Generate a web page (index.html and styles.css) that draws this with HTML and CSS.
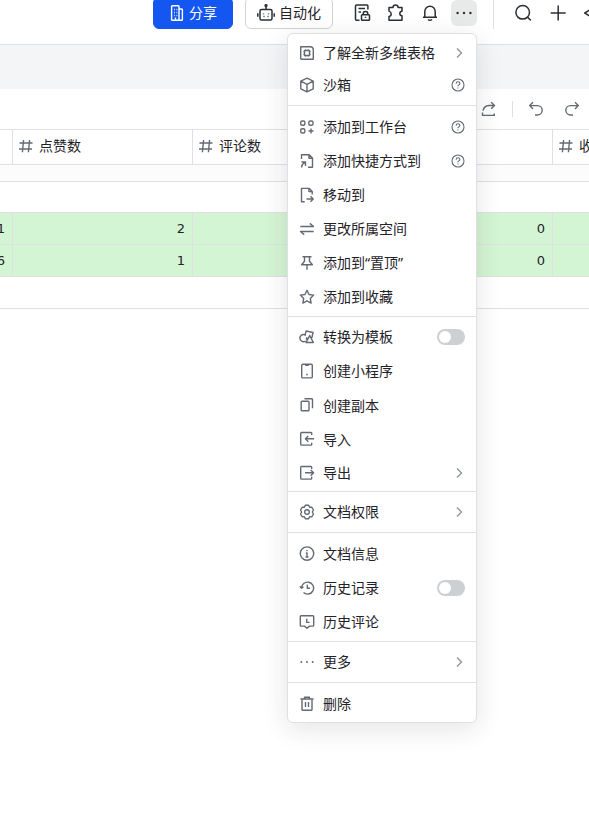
FILE: index.html
```html
<!DOCTYPE html>
<html lang="zh-CN">
	<head>
		<meta charset="utf-8">
		<title>多维表格</title>
		<meta name="viewport" content="width=device-width, initial-scale=1.0">
		<link rel="stylesheet" href="styles.css">
	</head>
	<body>
	<header class="topbar">
		<button class="btn btn-share">
			<svg class="icon" viewBox="0 0 16 16"><path d="M2.6 14.2V1.6q0-.8.8-.8h5.800q.8 0 .8.8v13.600H3.400q-.8 0-.8-.8zM10 4h2.600q.8 0 .8.8v9.600q0 .8-.8.8H10M5 4.500h.8M7.500 4.500h.8M5 7.500h.8M7.500 7.500h.8M5 10.500h.8M7.500 10.500h.8M6.500 12.500v2.500"/></svg>
			<span>分享</span>
		</button>
		<button class="btn btn-auto">
			<svg class="icon" viewBox="0 0 18 18"><rect x="3" y="5.500" width="12" height="10.500" rx="1.500"/><path d="M9 2v3.500M.8 9.300v3.400M17.200 9.300v3.400M6.500 12.500h1M10.500 12.500h1M6.500 9.500v.8M11.500 9.500v.8"/><circle cx="9" cy="1.600" r=".9"/></svg>
			<span>自动化</span>
		</button>
		<nav class="tools">
			<a><svg class="icon" viewBox="0 0 18 18"><path d="M6.500 16.300H3.500q-1 0-1-1V2q0-1 1-1h10.400q1 0 1 1v3.500M5.500 4.600h6.500M5.500 8h2.500"/><rect x="8.500" y="10.700" width="8" height="5.600" rx=".8"/><path d="M10.300 10.500V9q0-1.600 2.200-1.600T14.700 9v1.500M12.500 12.700v1.400"/></svg></a>
			<a><svg class="icon" viewBox="0 0 18 18"><path d="M2 3.500h4q0-2.400 2.500-2.400T11 3.500h4v3.700q-2.200.2-2.200 2.300t2.200 2.300v4.400H2v-3.700q2.200-.4 2.200-2.500T2 7.100z"/></svg></a>
			<a><svg class="icon" viewBox="0 0 18 18"><path d="M2 13.200h14M3.800 13V7.500a5.200 5.200 0 0 1 10.400 0V13M7 15.500q2 1.600 4 0"/></svg></a>
			<a class="more"><svg class="icon dots" viewBox="0 0 18 18"><circle cx="2.600" cy="9" r="1.200"/><circle cx="9" cy="9" r="1.200"/><circle cx="15.400" cy="9" r="1.200"/></svg></a>
		</nav>
		<i class="bar"></i>
		<nav class="tools tools-right">
			<a><svg class="icon" viewBox="0 0 18 18"><circle cx="8.700" cy="8.300" r="6.800"/><path d="M13.600 13.200l3.200 3.200"/></svg></a>
			<a><svg class="icon" viewBox="0 0 18 18"><path d="M1.700 9h15M9.200 1.500v15"/></svg></a>
			<a><svg class="icon" viewBox="0 0 18 18"><path d="M6.500 5.500L.8 9l5.700 3.500L9 17l2.500-4.500L17.200 9l-5.700-3.500L9 1z"/></svg></a>
		</nav>
	</header>
	<div class="band"></div>
	<div class="toolbar">
		<svg class="icon" viewBox="0 0 16 16"><path d="M1.500 11.500v2.900h11.800v-1.800M2 9.700Q3 4.700 8 4.500h5.200M10.200 1.200l3.300 3.300-3.300 3.300"/></svg>
		<i class="bar"></i>
		<svg class="icon" viewBox="0 0 16 16"><path d="M5 1.300L1.700 4.600 5 7.900M2 4.600h7.500a4.700 4.700 0 0 1 0 9.400H7"/></svg>
		<svg class="icon" viewBox="0 0 16 16"><path d="M11 1.300l3.300 3.300L11 7.900M14 4.600H6.500a4.700 4.700 0 0 0 0 9.400H9"/></svg>
	</div>
	<main class="table">
		<div class="row head">
			<div></div>
			<div><svg class="icon" viewBox="0 0 16 16"><path d="M5.600 2L4.400 14.200M11.600 2l-1.200 12.200M1.500 5h13M1 11h13"/></svg>点赞数</div>
			<div><svg class="icon" viewBox="0 0 16 16"><path d="M5.600 2L4.400 14.200M11.600 2l-1.200 12.200M1.500 5h13M1 11h13"/></svg>评论数</div>
			<div></div>
			<div><svg class="icon" viewBox="0 0 16 16"><path d="M5.600 2L4.400 14.200M11.600 2l-1.200 12.200M1.500 5h13M1 11h13"/></svg>收</div>
		</div>
		<div class="spacer"></div>
		<div class="blank first"></div>
		<div class="row green"><div>1</div><div>2</div><div></div><div>0</div><div></div></div>
		<div class="row green"><div>6</div><div>1</div><div></div><div>0</div><div></div></div>
		<div class="blank"></div>
	</main>

	<div class="menu">
		<ul class="g1">
			<li><svg class="icon" viewBox="0 0 16 16"><path d="M1.700 1.700h9.500q3.100 0 3.100 3.100v9.500H2.700q-1 0-1-1z"/><path d="M6.500 4.500v1M9.500 4.500v1M6.500 10.500v1M9.500 10.500v1M4.500 6.500h1M4.500 9.500h1M10.500 6.500h1M10.500 9.500h1"/><rect x="5.500" y="5.500" width="5" height="5" rx=".5"/></svg><span>了解全新多维表格</span><svg class="arrow" viewBox="0 0 12 12"><path d="M4 1.500L8.500 6 4 10.500"/></svg></li>
			<li><svg class="icon" viewBox="0 0 16 16"><path d="M8 1.200l6.200 3v7.600L8 14.900l-6.200-3.100V4.200zM1.800 4.200L8 7.300l6.200-3.100M8 7.300v7.600"/></svg><span>沙箱</span><svg class="help" viewBox="0 0 14 14"><circle cx="7" cy="7" r="6"/><path d="M5.100 5.700q0-1.900 1.900-1.900t1.900 1.700Q8.900 6.500 7 7.400v.8M7 9.500v1"/></svg></li>
		</ul>
		<ul class="g2">
			<li><svg class="icon" viewBox="0 0 16 16"><rect x="1.700" y="2" width="4.200" height="4.200" rx="1.500"/><rect x="9.800" y="2" width="4.200" height="4.200" rx="1.500"/><rect x="1.700" y="9.800" width="4.200" height="4.200" rx="1.500"/><path d="M12 9.500v5M9.500 12h5"/></svg><span>添加到工作台</span><svg class="help" viewBox="0 0 14 14"><circle cx="7" cy="7" r="6"/><path d="M5.100 5.700q0-1.900 1.900-1.900t1.900 1.700Q8.900 6.500 7 7.400v.8M7 9.500v1"/></svg></li>
			<li><svg class="icon" viewBox="0 0 16 16"><path d="M2.500 6V1.700h7.700L13.500 5v9.300H9M10 1.800v3.400h3.300M2.500 9h4v4M6.300 9.200Q3 10.500 2.500 14.500"/></svg><span>添加快捷方式到</span><svg class="help" viewBox="0 0 14 14"><circle cx="7" cy="7" r="6"/><path d="M5.100 5.700q0-1.900 1.900-1.900t1.900 1.700Q8.900 6.500 7 7.400v.8M7 9.500v1"/></svg></li>
			<li><svg class="icon" viewBox="0 0 16 16"><path d="M5.700 14.700H2.500V1.400h7.700l3 3V7.500M9.900 1.500v3.100H13M7.500 12h6.200M11.500 9.300l2.700 2.700-2.700 2.700"/></svg><span>移动到</span></li>
			<li><svg class="icon" viewBox="0 0 16 16"><path d="M1.300 5.500h13.200L10.800 2.400M14.700 10.500H1.500l3.700 3.100"/></svg><span>更改所属空间</span></li>
			<li><svg class="icon" viewBox="0 0 16 16"><path d="M3.500 1.700h9M5.500 1.900v4.300L2.600 9.700h10.800l-2.900-3.500V1.900M8 9.700v5"/></svg><span>添加到“置顶”</span></li>
			<li><svg class="icon" viewBox="0 0 16 16"><path d="M8 1.300l2 4.200 4.700.6-3.400 3.300.8 4.700L8 11.900l-4.100 2.200.8-4.700L1.300 6.100 6 5.500z"/></svg><span>添加到收藏</span></li>
		</ul>
		<ul class="g3">
			<li><svg class="icon" viewBox="0 0 16 16"><path d="M6.500 12a3.500 3.500 0 1 1 .3-5.500M6 6l1.200-4 6.800 1.500-1.200 5.500M10.700 6.600l3.700 6.900H7zM7.500 8.200q.5 1-.2 2.500"/></svg><span>转换为模板</span><i class="switch"></i></li>
			<li><svg class="icon" viewBox="0 0 16 16"><rect x="2.700" y="1.200" width="10.600" height="13.700" rx="1.200"/><path d="M6.200 2.300h3.600M7.200 11.500h1.600"/></svg><span>创建小程序</span></li>
			<li class="nudge"><svg class="icon" viewBox="0 0 16 16"><rect x="2.200" y="4.300" width="7.800" height="9.500" rx=".8"/><path d="M5.500 1.800h7.200q.8 0 .8.8v8.700"/></svg><span>创建副本</span></li>
			<li class="nudge"><svg class="icon" viewBox="0 0 16 16"><path d="M12.700 4V2.300q0-.8-.8-.8H2.500q-.8 0-.8.8v11q0 .8.8.8h9.400q.8 0 .8-.8V11.700M15 7.800H6.700M9.300 4.900L6.400 7.800l2.900 2.900"/></svg><span>导入</span></li>
			<li><svg class="icon" viewBox="0 0 16 16"><path d="M12.700 4V2.300q0-.8-.8-.8H2.500q-.8 0-.8.8v11q0 .8.8.8h9.400q.8 0 .8-.8V11.700M6 7.800h8.500M11.700 4.900l2.900 2.900-2.900 2.900"/></svg><span>导出</span><svg class="arrow" viewBox="0 0 12 12"><path d="M4 1.500L8.500 6 4 10.500"/></svg></li>
		</ul>
		<ul class="g4">
			<li><svg class="icon" viewBox="0 0 16 16"><path d="M6.300 1.300h3.400l.9 1.900 2.100-.1 1.800 2.900L13.300 8l1.200 2-1.800 2.900-2.100-.1-.9 1.900H6.300l-.9-1.900-2.100.1L1.500 10l1.200-2-1.200-2 1.800-2.900 2.100.1z"/><circle cx="8" cy="8" r="2.300"/></svg><span>文档权限</span><svg class="arrow" viewBox="0 0 12 12"><path d="M4 1.500L8.500 6 4 10.500"/></svg></li>
		</ul>
		<ul class="g5">
			<li><svg class="icon" viewBox="0 0 16 16"><circle cx="8" cy="7.600" r="6.700"/><path d="M8 3.900v1.300M6.800 7H8v4M6.500 11h3"/></svg><span>文档信息</span></li>
			<li><svg class="icon" viewBox="0 0 16 16"><path d="M2.600 8.500a6 6 0 1 1 1.900 4M.9 6.300l1.700 2 1.900-1.500M8.300 4.700v3.600H11"/></svg><span>历史记录</span><i class="switch"></i></li>
			<li><svg class="icon" viewBox="0 0 16 16"><path d="M2.100 1.700h11.800q.8 0 .8.8v8.800q0 .8-.8.8h-3.400L8 14.300l-2.500-2.200H2.100q-.8 0-.8-.8V2.500q0-.8.8-.8zM7.700 4.700v3.700h2.800"/></svg><span>历史评论</span></li>
		</ul>
		<ul class="g6">
			<li><svg class="icon dots" viewBox="0 0 16 16"><circle cx="2.300" cy="8" r="1"/><circle cx="8" cy="8" r="1"/><circle cx="13.700" cy="8" r="1"/></svg><span>更多</span><svg class="arrow" viewBox="0 0 12 12"><path d="M4 1.500L8.500 6 4 10.500"/></svg></li>
		</ul>
		<ul class="g7">
			<li><svg class="icon" viewBox="0 0 16 16"><path d="M1.500 3h13M5.500 2.800V1.300h5v1.500M3 3v10.400q0 .9.900.9h8.200q.9 0 .9-.9V3M6.500 6v5M9.500 6v5"/></svg><span>删除</span></li>
		</ul>
	</div>
	</body>
</html>
```
FILE: styles.css
```css
*{
	box-sizing: border-box;
}

body{
	margin: 0;
	position: relative;
	height: 837px;
	overflow: hidden;
	background: #fff;
	color: #1f2329;
	font: 14px/20px "Noto Sans", "Noto Sans CJK SC", sans-serif;
}

svg{
	flex: none;
	fill: none;
	stroke: #646a73;
	stroke-width: 1.4;
	stroke-linejoin: round;
}

.icon{
	width: 16px;
	height: 16px;
}

.dots{
	fill: #646a73;
	stroke: none;
}

.bar{
	flex: none;
	width: 1px;
	background: #dee0e3;
}

/* top bar */
.topbar{
	display: flex;
	align-items: flex-start;
	height: 45px;
	padding-left: 153px;
	border-bottom: 1px solid #dee0e3;
	overflow: hidden;
}

.btn{
	display: flex;
	flex: none;
	align-items: center;
	gap: 4px;
	height: 32px;
	margin-top: -3px;
	padding: 0;
	border: 1px solid #d0d3d6;
	border-radius: 6px;
	background: #fff;
	color: #1f2329;
	font: inherit;
	white-space: nowrap;
}

.btn-share{
	width: 80px;
	padding-left: 15px;
	border-color: #1456f0;
	background: #1456f0;
	color: #fff;
}

.btn-share svg{
	stroke: #fff;
}

.btn-auto{
	width: 88px;
	margin-left: 12px;
	padding-left: 11px;
}

.topbar .btn-auto svg,
.tools svg{
	width: 18px;
	height: 18px;
	stroke: #2b2f36;
	stroke-width: 1.5;
}

.tools{
	display: flex;
	flex: none;
	margin-left: 12px;
}

.tools a{
	display: flex;
	flex: none;
	align-items: center;
	justify-content: center;
	width: 34px;
	height: 26px;
}

.tools .more{
	width: 26px;
	margin: 0 4px;
	border-radius: 6px;
	background: #e8eaea;
}

.tools .dots{
	fill: #2b2f36;
	stroke: none;
}

.topbar .bar{
	height: 29px;
	margin-left: 12px;
}

.tools-right{
	flex: 1;
	min-width: 0;
	margin-left: 11px;
	overflow: hidden;
}

.tools-right a{
	width: 35px;
}

.band{
	height: 44px;
	background: #f4f5f7;
}

.toolbar{
	display: flex;
	align-items: center;
	height: 40px;
	padding-left: 481px;
}

.toolbar .bar{
	height: 16px;
	margin: 0 15px;
}

.toolbar .bar + svg{
	margin-right: 20px;
}

/* grid */
.table{
	border-top: 1px solid #dee0e3;
}

.row{
	display: grid;
	grid-template-columns: 13px 180px 180px 180px 1fr;
	height: 32px;
	border-bottom: 1px solid #dee0e3;
}

.row div{
	display: flex;
	align-items: center;
	justify-content: flex-end;
	min-width: 0;
	padding-right: 7px;
	border-right: 1px solid #dee0e3;
}

.row div:last-child{
	border-right: none;
	overflow: hidden;
}

.row.head{
	height: 35px;
}

.head div{
	justify-content: flex-start;
	gap: 5px;
	padding: 0 0 2px 5px;
}

.green{
	background: #d4f5d3;
	font: 13px/20px "DejaVu Sans", sans-serif;
}

.spacer{
	height: 17px;
	background: #fcfcfd;
	border-bottom: 1px solid #dee0e3;
}

.blank{
	height: 32px;
	border-bottom: 1px solid #dee0e3;
}

.first{
	height: 31px;
}

/* dropdown menu */
.menu{
	position: absolute;
	left: 287px;
	top: 33px;
	width: 190px;
	height: 690px;
	border: 1px solid #dee0e3;
	border-radius: 6px;
	background: #fff;
	box-shadow: 0 6px 26px rgba(31, 35, 41, 0.12);
}

.menu ul{
	margin: 0;
	padding: 3px 0;
	list-style: none;
	border-bottom: 1px solid #dee0e3;
}

.menu li{
	display: flex;
	align-items: center;
	gap: 8px;
	height: 34px;
	padding: 0 11px;
	white-space: nowrap;
}

.menu li span{
	flex: 1;
}

.menu .g1{
	height: 72px;
	padding-top: 2px;
}

.menu .g1 li + li{
	height: 30px;
}

.menu .g2{
	height: 211px;
	padding-top: 4px;
}

.menu .g2 .icon,
.menu .g2 .help,
.menu .g5 .icon,
.menu .g5 .switch{
	margin-bottom: 1px;
}

.menu .g3{
	height: 175px;
}

.menu .g5{
	height: 109px;
	padding-top: 4px;
}

.menu .g7{
	padding: 4px 0 0;
	border: none;
}

.menu .nudge{
	padding-top: 1px;
}

.menu .nudge .icon{
	margin-bottom: 2px;
}

.help{
	width: 14px;
	height: 14px;
	stroke-width: 1.1;
}

.arrow{
	width: 12px;
	height: 12px;
	stroke: #8f959e;
	stroke-width: 1.4;
}

.switch{
	width: 28px;
	height: 16px;
	padding: 2px;
	border-radius: 8px;
	background: #cdd0d3;
}

.switch::before{
	content: "";
	display: block;
	width: 12px;
	height: 12px;
	border-radius: 50%;
	background: #fff;
}
```
